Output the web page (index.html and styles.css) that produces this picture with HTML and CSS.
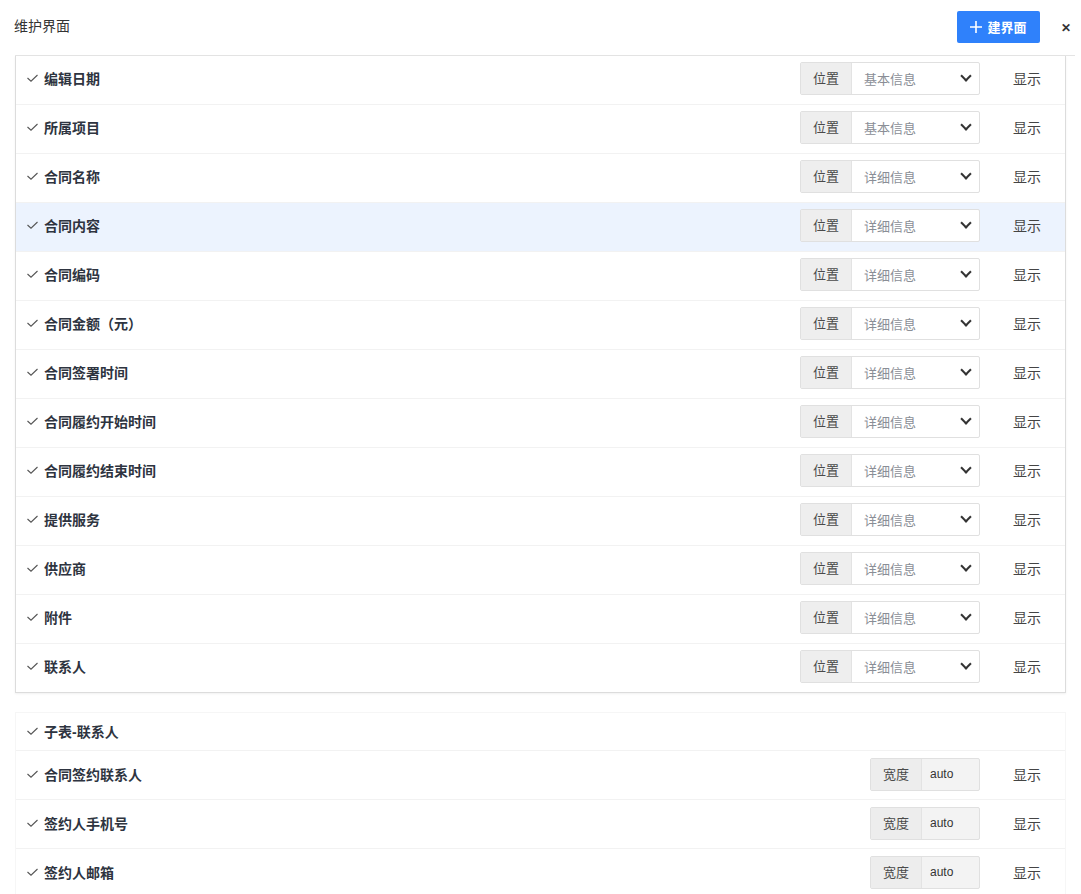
FILE: index.html
```html
<!DOCTYPE html>
<html lang="zh-CN">
<head>
    <meta charset="UTF-8">
    <title>维护界面</title>
    <link rel="stylesheet" href="styles.css">
</head>
<body>
    <div class="dialog">
        <div class="dialog-header">
            <span class="dialog-title">维护界面</span>
            <button class="btn-add"><svg class="plus" width="12" height="12" viewBox="0 0 12 12"><path d="M6 0V12M0 6H12" stroke="#fff" stroke-width="1.6"/></svg>建界面</button>
            <span class="btn-close">&#x2715;</span>
        </div>

        <div class="dialog-body">
            <!-- 主表字段 -->
            <div class="field-box main-box">
                <div class="field-row">
                    <span class="field-name"><svg class="check" width="11" height="8" viewBox="0 0 11 8"><polyline points="0.5,4 4,7.2 10.5,1"/></svg>编辑日期</span>
                    <div class="input-group"><span class="addon">位置</span><span class="select">基本信息<span class="arrow"></span></span></div>
                    <span class="show-link">显示</span>
                </div>
                <div class="field-row">
                    <span class="field-name"><svg class="check" width="11" height="8" viewBox="0 0 11 8"><polyline points="0.5,4 4,7.2 10.5,1"/></svg>所属项目</span>
                    <div class="input-group"><span class="addon">位置</span><span class="select">基本信息<span class="arrow"></span></span></div>
                    <span class="show-link">显示</span>
                </div>
                <div class="field-row">
                    <span class="field-name"><svg class="check" width="11" height="8" viewBox="0 0 11 8"><polyline points="0.5,4 4,7.2 10.5,1"/></svg>合同名称</span>
                    <div class="input-group"><span class="addon">位置</span><span class="select">详细信息<span class="arrow"></span></span></div>
                    <span class="show-link">显示</span>
                </div>
                <div class="field-row active">
                    <span class="field-name"><svg class="check" width="11" height="8" viewBox="0 0 11 8"><polyline points="0.5,4 4,7.2 10.5,1"/></svg>合同内容</span>
                    <div class="input-group"><span class="addon">位置</span><span class="select">详细信息<span class="arrow"></span></span></div>
                    <span class="show-link">显示</span>
                </div>
                <div class="field-row">
                    <span class="field-name"><svg class="check" width="11" height="8" viewBox="0 0 11 8"><polyline points="0.5,4 4,7.2 10.5,1"/></svg>合同编码</span>
                    <div class="input-group"><span class="addon">位置</span><span class="select">详细信息<span class="arrow"></span></span></div>
                    <span class="show-link">显示</span>
                </div>
                <div class="field-row">
                    <span class="field-name"><svg class="check" width="11" height="8" viewBox="0 0 11 8"><polyline points="0.5,4 4,7.2 10.5,1"/></svg>合同金额（元）</span>
                    <div class="input-group"><span class="addon">位置</span><span class="select">详细信息<span class="arrow"></span></span></div>
                    <span class="show-link">显示</span>
                </div>
                <div class="field-row">
                    <span class="field-name"><svg class="check" width="11" height="8" viewBox="0 0 11 8"><polyline points="0.5,4 4,7.2 10.5,1"/></svg>合同签署时间</span>
                    <div class="input-group"><span class="addon">位置</span><span class="select">详细信息<span class="arrow"></span></span></div>
                    <span class="show-link">显示</span>
                </div>
                <div class="field-row">
                    <span class="field-name"><svg class="check" width="11" height="8" viewBox="0 0 11 8"><polyline points="0.5,4 4,7.2 10.5,1"/></svg>合同履约开始时间</span>
                    <div class="input-group"><span class="addon">位置</span><span class="select">详细信息<span class="arrow"></span></span></div>
                    <span class="show-link">显示</span>
                </div>
                <div class="field-row">
                    <span class="field-name"><svg class="check" width="11" height="8" viewBox="0 0 11 8"><polyline points="0.5,4 4,7.2 10.5,1"/></svg>合同履约结束时间</span>
                    <div class="input-group"><span class="addon">位置</span><span class="select">详细信息<span class="arrow"></span></span></div>
                    <span class="show-link">显示</span>
                </div>
                <div class="field-row">
                    <span class="field-name"><svg class="check" width="11" height="8" viewBox="0 0 11 8"><polyline points="0.5,4 4,7.2 10.5,1"/></svg>提供服务</span>
                    <div class="input-group"><span class="addon">位置</span><span class="select">详细信息<span class="arrow"></span></span></div>
                    <span class="show-link">显示</span>
                </div>
                <div class="field-row">
                    <span class="field-name"><svg class="check" width="11" height="8" viewBox="0 0 11 8"><polyline points="0.5,4 4,7.2 10.5,1"/></svg>供应商</span>
                    <div class="input-group"><span class="addon">位置</span><span class="select">详细信息<span class="arrow"></span></span></div>
                    <span class="show-link">显示</span>
                </div>
                <div class="field-row">
                    <span class="field-name"><svg class="check" width="11" height="8" viewBox="0 0 11 8"><polyline points="0.5,4 4,7.2 10.5,1"/></svg>附件</span>
                    <div class="input-group"><span class="addon">位置</span><span class="select">详细信息<span class="arrow"></span></span></div>
                    <span class="show-link">显示</span>
                </div>
                <div class="field-row">
                    <span class="field-name"><svg class="check" width="11" height="8" viewBox="0 0 11 8"><polyline points="0.5,4 4,7.2 10.5,1"/></svg>联系人</span>
                    <div class="input-group"><span class="addon">位置</span><span class="select">详细信息<span class="arrow"></span></span></div>
                    <span class="show-link">显示</span>
                </div>
            </div>

            <!-- 子表字段 -->
            <div class="field-box sub-box">
                <div class="field-row sub-title">
                    <span class="field-name"><svg class="check" width="11" height="8" viewBox="0 0 11 8"><polyline points="0.5,4 4,7.2 10.5,1"/></svg>子表-联系人</span>
                </div>
                <div class="field-row">
                    <span class="field-name"><svg class="check" width="11" height="8" viewBox="0 0 11 8"><polyline points="0.5,4 4,7.2 10.5,1"/></svg>合同签约联系人</span>
                    <div class="input-group width-group"><span class="addon">宽度</span><span class="value">auto</span></div>
                    <span class="show-link">显示</span>
                </div>
                <div class="field-row">
                    <span class="field-name"><svg class="check" width="11" height="8" viewBox="0 0 11 8"><polyline points="0.5,4 4,7.2 10.5,1"/></svg>签约人手机号</span>
                    <div class="input-group width-group"><span class="addon">宽度</span><span class="value">auto</span></div>
                    <span class="show-link">显示</span>
                </div>
                <div class="field-row">
                    <span class="field-name"><svg class="check" width="11" height="8" viewBox="0 0 11 8"><polyline points="0.5,4 4,7.2 10.5,1"/></svg>签约人邮箱</span>
                    <div class="input-group width-group"><span class="addon">宽度</span><span class="value">auto</span></div>
                    <span class="show-link">显示</span>
                </div>
            </div>
        </div>
    </div>
</body>
</html>
```

FILE: styles.css
```css
body {
    margin: 0;
    font-family: "Liberation Sans", "Noto Sans CJK SC", sans-serif;
    font-size: 13px;
    color: #333;
    background: #fff;
}

.dialog {
    width: 1081px;
}

.dialog-header {
    display: flex;
    align-items: center;
    height: 55px;
    padding: 0 10px 0 14px;
}

.dialog-title {
    flex: 1;
    font-size: 14px;
    color: #333;
    margin-top: -6px;
}

.btn-add {
    display: flex;
    align-items: center;
    justify-content: center;
    height: 32px;
    width: 83px;
    margin-top: -2px;
    border: none;
    border-radius: 2px;
    background: #2f81fb;
    color: #fff;
    font-family: inherit;
    font-size: 13px;
    font-weight: bold;
    padding: 0;
    cursor: pointer;
}

.btn-add .plus {
    margin-right: 5px;
}

.btn-close {
    margin-left: 21px;
    font-size: 12px;
    font-weight: bold;
    color: #333;
}

.dialog-body {
    margin: 0 6px 0 15px;
    border-top: 1px solid #e4e4e4;
}

.field-box {
    margin-right: 9px;
    background: #fff;
}

.main-box {
    border: 1px solid #dcdcdc;
    border-top: none;
    box-shadow: 0 1px 2px rgba(0, 0, 0, 0.06);
}

.sub-box {
    margin-top: 19px;
    border: 1px solid #f6f6f6;
    border-bottom: none;
}

.field-row {
    display: flex;
    align-items: center;
    box-sizing: border-box;
    height: 49px;
    padding: 0 0 2px 11px;
    border-bottom: 1px solid #f2f2f2;
}

.main-box .field-row {
    padding-bottom: 4px;
}

.main-box .field-row:last-child {
    border-bottom: none;
    height: 48px;
}

.field-row.active {
    background: #ecf3fe;
}

.sub-title {
    height: 38px;
}

.field-name {
    flex: 1;
    display: flex;
    align-items: center;
    font-size: 14px;
    font-weight: bold;
    color: #2e3440;
}

.check {
    margin-right: 6px;
    fill: none;
    stroke: #555;
    stroke-width: 1.1;
}

.input-group {
    display: flex;
    box-sizing: border-box;
    height: 33px;
    width: 180px;
    border: 1px solid #e0e0e0;
    border-radius: 2px;
    background: #fff;
    font-size: 13px;
}

.addon {
    width: 50px;
    line-height: 31px;
    text-align: center;
    background: #eeeeee;
    border-right: 1px solid #e3e3e3;
    color: #4a4a4a;
}

.select {
    flex: 1;
    display: flex;
    align-items: center;
    padding-left: 12px;
    color: #8a8e96;
}

.arrow {
    margin-left: auto;
    margin-right: 9px;
    width: 6px;
    height: 6px;
    border-right: 2px solid #333;
    border-bottom: 2px solid #333;
    transform: translateY(-2px) rotate(45deg);
}

.width-group {
    width: 110px;
    background: #f3f3f3;
}

.width-group .addon {
    background: #ededed;
}

.value {
    flex: 1;
    line-height: 31px;
    padding-left: 8px;
    color: #333;
    font-size: 12px;
}

.show-link {
    margin-left: 33px;
    margin-right: 24px;
    font-size: 14px;
    color: #444;
}
```
